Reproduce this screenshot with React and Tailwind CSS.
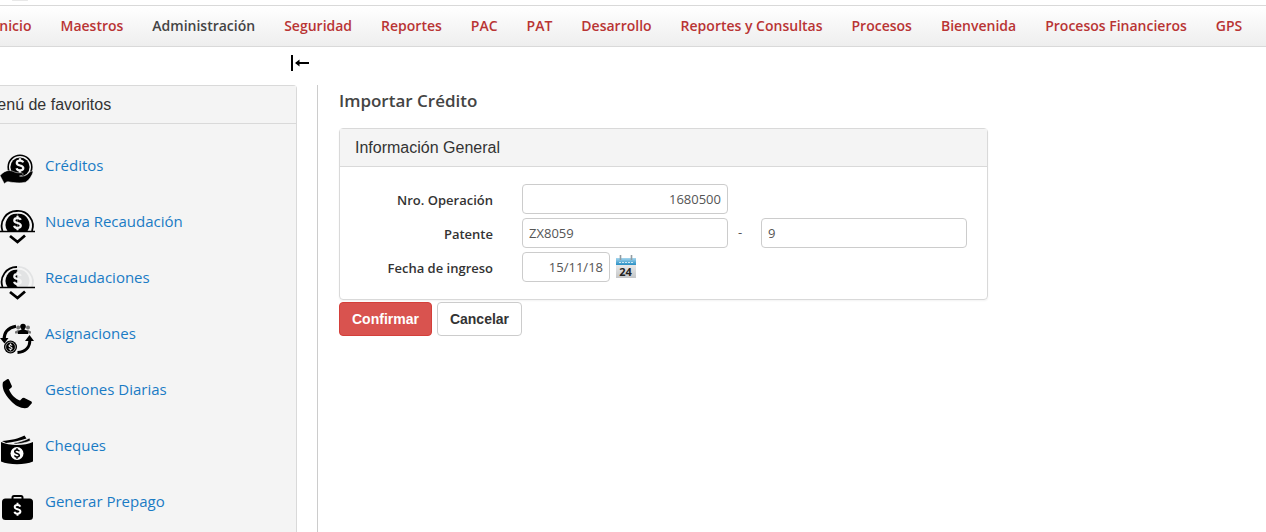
import React from "react";

const navItems = [
  "Inicio", "Maestros", "Administración", "Seguridad", "Reportes", "PAC", "PAT", "Desarrollo",
  "Reportes y Consultas", "Procesos", "Bienvenida", "Procesos Financieros", "GPS",
];

function Dollar({ x, y, s, fill }) {
  return (
    <g transform={`translate(${x} ${y}) scale(${s})`} fill="none" stroke={fill} strokeWidth="2.6">
      <path d="M3.8 -3.6C3.2 -5.2 1.8 -5.8 0 -5.8C-2.2 -5.8 -3.8 -4.8 -3.8 -3C-3.8 1 3.9 -1 3.9 3C3.9 4.8 2.2 5.8 0 5.8C-2.2 5.8 -3.6 5 -4 3.2M0 -8.6V-5M0 5V8.6" />
    </g>
  );
}

function CreditIcon() {
  return (
    <svg viewBox="0 0 34 34" className="size-full" aria-hidden="true">
      <circle cx="20" cy="14" r="11.8" fill="none" stroke="#000" strokeWidth="1.6" />
      <circle cx="20" cy="14" r="9.6" />
      <Dollar x={20} y={12.5} s={0.85} fill="#f4f4f4" />
      <path d="M0 22.5C3 19.5 6 17.300 9.500 17.500C13 17.700 14 19.300 17 19.700C20 19.900 22.500 19.300 23 20.800C23.300 22 22 22.800 19.500 23C23 23.800 26.500 22.500 29 19.800C30.500 18 33 17.500 33 19C32 22.500 29.500 27 25.500 29.200C20 30.600 13 29.600 8.500 28.800C6.500 28.500 5.500 29.500 4.500 31Z" stroke="#f4f4f4" strokeWidth=".5" />
    </svg>
  );
}

function CollectIcon({ half }) {
  return (
    <svg viewBox="0 0 34 34" className="size-full overflow-visible" aria-hidden="true">
      <path d="M2.500 22A15 15 0 0 1 17 2" fill="none" stroke="#000" strokeWidth="1.800" />
      <path d="M17 2A15 15 0 0 1 32 22" fill="none" stroke={half ? "#e2e3e4" : "#000"} strokeWidth="1.800" />
      <path d="M7.500 22A11 11 0 0 1 17.500 4.800V22Z" />
      <path d="M17.500 4.800A11 11 0 0 1 27.500 22H17.500Z" fill={half ? "#e2e3e4" : "#000"} />
      <Dollar x={17.5} y={14} s={0.85} fill="#f4f4f4" />
      <path d="M0 22.500H35" stroke="#000" strokeWidth="1.400" />
      <path d="M10 27L17.500 33L25 26.500" fill="none" stroke="#000" strokeWidth="2.800" />
    </svg>
  );
}

function AssignIcon() {
  return (
    <svg viewBox="0 0 34 34" className="size-full" aria-hidden="true">
      <path d="M4 19C4 11 8 6.500 16 5.200" fill="none" stroke="#000" strokeWidth="3" />
      <path d="M0 17L8.500 17L4.500 22.500Z" />
      <path d="M17.500 31.500C25.500 31 30 26 29.800 19" fill="none" stroke="#000" strokeWidth="3" />
      <path d="M25 20L29.500 14L34 20Z" />
      <circle cx="10.500" cy="26" r="6.500" />
      <circle cx="10.500" cy="26" r="4.900" fill="none" stroke="#bbb" strokeWidth=".8" />
      <Dollar x={10.5} y={26} s={0.4} fill="#fff" />
      <g fill="#777">
        <circle cx="18.200" cy="6.500" r="2" /><circle cx="28" cy="6.500" r="2" />
        <path d="M15 12.500V10.500L18 9L28 9L31 10.500V12.500Z" />
      </g>
      <circle cx="23" cy="5.500" r="2.800" />
      <path d="M18 13V10.500L21.500 8.500V7H24.500V8.500L28 10.500V13Z" />
    </svg>
  );
}

function PhoneIcon() {
  return (
    <svg viewBox="0 0 34 34" className="size-full" aria-hidden="true">
      <path d="M3 5L7.500 2L8.800 2.200L12 9.200L11.500 10.500L9 12.500C11 17.500 15 21.500 20 23.500L22.500 21L24 20.700L31.500 24.500L32 26L28 30.500C24 32.500 16 30 10.500 23.500C4 17 1.500 10 3 5Z" />
    </svg>
  );
}

function ChequeIcon() {
  return (
    <svg viewBox="0 0 34 34" className="size-full" aria-hidden="true">
      <path d="M1 9C9 13 25 13 33 9V28.500C25 32 9 32 1 28.500Z" />
      <path d="M2 8C10 7.500 19 5.500 24.500 2.500L26.500 5.500C20 7.500 13 9.500 6 10Z" />
      <path d="M14 10C20 9 25 7.500 29.500 5L30.500 7.500C27 9.500 20 11 14 11Z" stroke="#f4f4f4" strokeWidth=".6" />
      <circle cx="17" cy="20.500" r="6.500" fill="#fff" />
      <Dollar x={17} y={20.5} s={0.6} fill="#000" />
    </svg>
  );
}

function CaseIcon() {
  return (
    <svg viewBox="0 0 34 34" className="size-full" aria-hidden="true">
      <path d="M12.500 11V8.500Q12.500 7 14 7H21Q22.500 7 22.500 8.500V11" fill="none" stroke="#000" strokeWidth="2" />
      <rect x="2" y="9.500" width="31" height="21.500" rx="3.500" />
      <Dollar x={17.5} y={20.3} s={0.75} fill="#fff" />
    </svg>
  );
}

const favorites = [
  ["Créditos", <CreditIcon />],
  ["Nueva Recaudación", <CollectIcon />],
  ["Recaudaciones", <CollectIcon half />],
  ["Asignaciones", <AssignIcon />],
  ["Gestiones Diarias", <PhoneIcon />],
  ["Cheques", <ChequeIcon />],
  ["Generar Prepago", <CaseIcon />],
];

function CalendarIcon() {
  return (
    <svg viewBox="0 0 22 24" className="h-6 w-[22px]" aria-hidden="true">
      <defs>
        <linearGradient id="page" x1="0" y1="0" x2="0" y2="1"><stop stopColor="#fafafa" /><stop offset="1" stopColor="#c4c6c8" /></linearGradient>
        <linearGradient id="head" x1="0" y1="0" x2="0" y2="1"><stop stopColor="#a5d6ee" /><stop offset="1" stopColor="#288fc4" /></linearGradient>
      </defs>
      <rect x="1" y="3" width="20" height="20" fill="url(#page)" />
      <rect x="1" y="3" width="20" height="7" fill="url(#head)" />
      <path d="M4 7.500H18" stroke="#cce8f5" strokeWidth="1" strokeDasharray="2 1" />
      <path d="M5.500 0V5M16.500 0V5" stroke="#929da3" strokeWidth="1.600" />
      <text x="10.500" y="20.500" textAnchor="middle" fontFamily="Open Sans, sans-serif" fontWeight="700" fontSize="11" fill="#222">24</text>
    </svg>
  );
}

const field = "h-[30px] rounded border border-[#ccc] bg-white px-1.5 text-[13px] text-[#555]";
const label = "pt-1 text-right text-[13px] font-semibold text-[#333]";
const panelTitle = "border-b border-[#d9d9d9] bg-[#f4f4f4] px-[15px] py-[7px] font-['Liberation_Sans',sans-serif] text-base leading-[23px] text-[#333]";

export default function App() {
  return (
    <div className="flex min-h-screen flex-col overflow-x-hidden bg-white font-['Open_Sans',sans-serif]">
      <header className="h-[5px] pl-3">
        <div className="h-px w-4 rounded-full bg-[#e8e8e8]" />
      </header>
      <nav className="flex h-[42px] items-center gap-[29px] overflow-hidden border-y border-[#d9d9d9] bg-linear-to-b from-white to-[#eeeeee] text-sm font-semibold">
        {navItems.map((item, i) => (
          <a key={item} href="#" className={`shrink-0 whitespace-nowrap ${i === 0 ? "-ml-[5px]" : ""} ${i === 2 ? "text-[#444]" : "text-[#b93434]"}`}>
            {item}
          </a>
        ))}
      </nav>
      <div className="flex flex-1">
        <div className="flex w-[297px] shrink-0 flex-col">
          <div className="flex h-[38px] items-start justify-end pt-2">
            <button type="button" aria-label="Ocultar menú" className="-mr-3">
              <svg viewBox="0 0 18 16" className="block h-4 w-[18px]"><path d="M1 0V16" stroke="#000" strokeWidth="2" /><path d="M5 8H18" stroke="#000" strokeWidth="2" /><path d="M4 8L8.500 4.500V11.500Z" /></svg>
            </button>
          </div>
          <aside className="flex-1 rounded-tr border-t border-r border-[#d9d9d9] bg-[#f4f4f4]">
            <h2 className={`-ml-[31px] ${panelTitle}`}>Menú de favoritos</h2>
            <ul className="pt-[15px]">
              {favorites.map(([name, icon]) => (
                <li key={name} className="h-14">
                  <a href="#" className="flex items-start gap-[11px] pt-[14px] text-[15px] leading-6 text-[#1a7bc4]">
                    <span className="size-[34px] shrink-0">{icon}</span>
                    {name}
                  </a>
                </li>
              ))}
            </ul>
          </aside>
        </div>
        <main className="mt-[38px] ml-5 flex-1 border-l border-[#ccc] pl-[21px]">
          <h1 className="pt-1 text-[17px] leading-6 font-semibold text-[#444]">Importar Crédito</h1>
          <form className="mt-[15px] max-w-[649px]" onSubmit={(e) => e.preventDefault()}>
            <section className="rounded border border-[#d9d9d9] shadow-xs">
              <h2 className={panelTitle}>Información General</h2>
              <div className="grid grid-cols-[153px_1fr] items-center gap-x-[29px] gap-y-1 py-[17px] pr-5">
                <label htmlFor="op" className={label}>Nro. Operación</label>
                <input id="op" defaultValue="1680500" className={`${field} w-[206px] text-right`} />
                <label htmlFor="pat" className={label}>Patente</label>
                <div className="flex items-center text-[13px] text-[#555]">
                  <input id="pat" defaultValue="ZX8059" className={`${field} w-[206px]`} />
                  <span className="w-[33px] pl-[10px]">-</span>
                  <input aria-label="Dígito verificador" defaultValue="9" className={`${field} w-[206px]`} />
                </div>
                <label htmlFor="date" className={label}>Fecha de ingreso</label>
                <div className="flex items-center gap-[5px]">
                  <input id="date" defaultValue="15/11/18" className={`${field} w-[88px] text-right`} />
                  <button type="button" aria-label="Abrir calendario"><CalendarIcon /></button>
                </div>
              </div>
            </section>
            <div className="mt-0.5 flex gap-[5px] font-['Liberation_Sans',sans-serif] text-sm font-bold">
              <button type="submit" className="h-[34px] rounded border border-[#d43f3a] bg-[#d9534f] px-3 text-white">Confirmar</button>
              <button type="button" className="h-[34px] rounded border border-[#ccc] bg-white px-3 text-[#333]">Cancelar</button>
            </div>
          </form>
        </main>
      </div>
    </div>
  );
}
